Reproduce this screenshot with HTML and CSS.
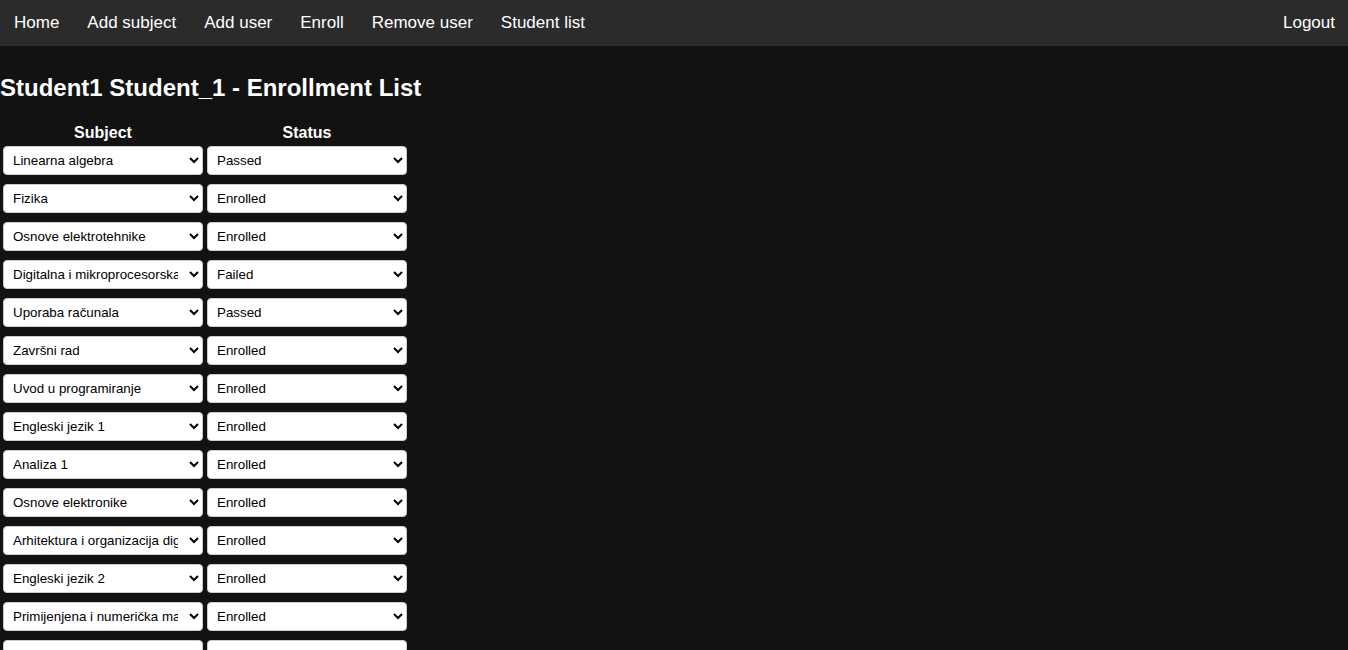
FILE: index.html
```html
<!DOCTYPE html>
<html>
<head>
<meta charset="utf-8">
<link rel="stylesheet" href="styles.css">
</head>
<body>
<nav class="nav">
  <div class="nav-left">
    <a class="nav-link" href="#">Home</a>
    <a class="nav-link" href="#">Add subject</a>
    <a class="nav-link" href="#">Add user</a>
    <a class="nav-link" href="#">Enroll</a>
    <a class="nav-link" href="#">Remove user</a>
    <a class="nav-link" href="#">Student list</a>
  </div>
  <a class="nav-link nav-end" href="#">Logout</a>
</nav>
<h2 class="title">Student1 Student_1 - Enrollment List</h2>
<table class="list">
  <thead>
    <tr><th>Subject</th><th>Status</th></tr>
  </thead>
  <tbody>
    <tr><td><select class="sel"><option>Linearna algebra</option></select></td><td><select class="sel"><option>Passed</option><option>Enrolled</option><option>Failed</option></select></td></tr>
    <tr><td><select class="sel"><option>Fizika</option></select></td><td><select class="sel"><option>Enrolled</option></select></td></tr>
    <tr><td><select class="sel"><option>Osnove elektrotehnike</option></select></td><td><select class="sel"><option>Enrolled</option></select></td></tr>
    <tr><td><select class="sel"><option>Digitalna i mikroprocesorska elektronika</option></select></td><td><select class="sel"><option>Failed</option></select></td></tr>
    <tr><td><select class="sel"><option>Uporaba računala</option></select></td><td><select class="sel"><option>Passed</option></select></td></tr>
    <tr><td><select class="sel"><option>Završni rad</option></select></td><td><select class="sel"><option>Enrolled</option></select></td></tr>
    <tr><td><select class="sel"><option>Uvod u programiranje</option></select></td><td><select class="sel"><option>Enrolled</option></select></td></tr>
    <tr><td><select class="sel"><option>Engleski jezik 1</option></select></td><td><select class="sel"><option>Enrolled</option></select></td></tr>
    <tr><td><select class="sel"><option>Analiza 1</option></select></td><td><select class="sel"><option>Enrolled</option></select></td></tr>
    <tr><td><select class="sel"><option>Osnove elektronike</option></select></td><td><select class="sel"><option>Enrolled</option></select></td></tr>
    <tr><td><select class="sel"><option>Arhitektura i organizacija digitalnih računala</option></select></td><td><select class="sel"><option>Enrolled</option></select></td></tr>
    <tr><td><select class="sel"><option>Engleski jezik 2</option></select></td><td><select class="sel"><option>Enrolled</option></select></td></tr>
    <tr><td><select class="sel"><option>Primijenjena i numerička matematika</option></select></td><td><select class="sel"><option>Enrolled</option></select></td></tr>
    <tr><td><select class="sel"><option>Programsko inženjerstvo</option></select></td><td><select class="sel"><option>Enrolled</option></select></td></tr>
  </tbody>
</table>
</body>
</html>
```
FILE: styles.css
```css
html, body {
  margin: 0;
  padding: 0;
  background: #121212;
  color: #ffffff;
  font-family: "Liberation Sans", Arial, sans-serif;
}
.nav {
  display: flex;
  justify-content: space-between;
  align-items: center;
  background: #2b2b2b;
  height: 46px;
}
.nav-left {
  display: flex;
}
.nav-link {
  color: #ffffff;
  text-decoration: none;
  font-size: 17px;
  line-height: 20px;
  padding: 13px 14px;
}
.nav-end {
  padding-right: 13px;
}
.title {
  font-size: 24px;
  font-weight: bold;
  margin: 28px 0 19px 0;
  line-height: 28px;
}
.list {
  border-spacing: 2px;
}
.list th {
  font-size: 16px;
  font-weight: bold;
  padding: 1px;
  text-align: center;
  line-height: 18px;
}
.list td {
  padding: 1px;
  vertical-align: top;
}
.sel {
  display: block;
  width: 200px;
  height: 29px;
  margin: 0 0 5px 0;
  padding: 0 8px 0 5px;
  font-family: "Liberation Sans", Arial, sans-serif;
  font-size: 13.333px;
  color: #000000;
  background: #ffffff;
  border: 1px solid #cccccc;
  border-radius: 4px;
}
```
